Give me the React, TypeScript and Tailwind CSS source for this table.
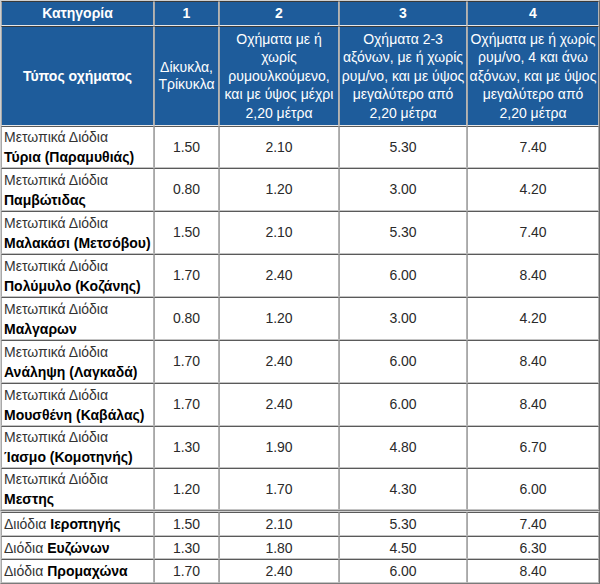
import React from "react";

const rows: { name: string; v: string[]; h: number }[] = [
  { name: "Τύρια (Παραμυθιάς)", v: ["1.50", "2.10", "5.30", "7.40"], h: 42 },
  { name: "Παμβώτιδας", v: ["0.80", "1.20", "3.00", "4.20"], h: 43 },
  { name: "Μαλακάσι (Μετσόβου)", v: ["1.50", "2.10", "5.30", "7.40"], h: 43 },
  { name: "Πολύμυλο (Κοζάνης)", v: ["1.70", "2.40", "6.00", "8.40"], h: 43 },
  { name: "Μαλγαρων", v: ["0.80", "1.20", "3.00", "4.20"], h: 43 },
  { name: "Ανάληψη (Λαγκαδά)", v: ["1.70", "2.40", "6.00", "8.40"], h: 43 },
  { name: "Μουσθένη (Καβάλας)", v: ["1.70", "2.40", "6.00", "8.40"], h: 43 },
  { name: "Ίασμο (Κομοτηνής)", v: ["1.30", "1.90", "4.80", "6.70"], h: 42 },
  { name: "Μεστης", v: ["1.20", "1.70", "4.30", "6.00"], h: 42 },
];

const rows2: { pre: string; name: string; v: string[]; h: number }[] = [
  { pre: "Διιόδια ", name: "Ιεροπηγής", v: ["1.50", "2.10", "5.30", "7.40"], h: 24 },
  { pre: "Διόδια ", name: "Ευζώνων", v: ["1.30", "1.80", "4.50", "6.30"], h: 23 },
  { pre: "Διόδια ", name: "Προμαχώνα", v: ["1.70", "2.40", "6.00", "8.40"], h: 24 },
];

const cell =
  "border-t border-l border-r border-b border-t-[#5a5a5a] border-l-[#a8a8a8] border-r-[#b4b4b4] border-b-[#c4c4c4]";
const hcell =
  "border-t border-l border-r border-b border-t-[#3a3a3a] border-l-[#a8a8a8] border-r-[#b4b4b4] border-b-[#e8e8e8] bg-[#1e5c9b] text-white";

function Cols() {
  return (
    <colgroup>
      <col style={{ width: 153 }} />
      <col style={{ width: 65 }} />
      <col style={{ width: 120 }} />
      <col style={{ width: 128 }} />
      <col style={{ width: 132 }} />
    </colgroup>
  );
}

export default function App() {
  return (
    <div className="w-[600px] h-[584px] bg-white font-['Liberation_Sans',Arial,sans-serif] text-[14px] text-[#2a2a2a] overflow-hidden">
      <table className="w-[598px] table-fixed border-separate border-spacing-0 border border-t-[#d0d0d0] border-l-[#d0d0d0] border-r-[#6a6a6a] border-b-[#7a7a7a]">
        <Cols />
        <tbody>
          <tr className="h-[25px]">
            <td className={`${hcell} text-center font-bold`}>Κατηγορία</td>
            <td className={`${hcell} text-center font-bold`}>1</td>
            <td className={`${hcell} text-center font-bold`}>2</td>
            <td className={`${hcell} text-center font-bold`}>3</td>
            <td className={`${hcell} text-center font-bold`}>4</td>
          </tr>
          <tr className="h-[100px]">
            <td className={`${hcell} text-center font-bold`}>Τύπος οχήματος</td>
            <td className={`${hcell} text-center leading-[17px]`}>Δίκυκλα, Τρίκυκλα</td>
            <td className={`${hcell} text-center leading-[18.5px] px-[2px]`}>
              Οχήματα με ή χωρίς ρυμουλκούμενο, και με ύψος μέχρι 2,20 μέτρα
            </td>
            <td className={`${hcell} text-center leading-[18.5px] px-[1px]`}>
              Οχήματα 2-3 αξόνων, με ή χωρίς ρυμ/νο, και με ύψος μεγαλύτερο από 2,20 μέτρα
            </td>
            <td className={`${hcell} text-center leading-[18.5px] px-[1px]`}>
              Οχήματα με ή χωρίς ρυμ/νο, 4 και άνω αξόνων, και με ύψος μεγαλύτερο από 2,20 μέτρα
            </td>
          </tr>
          {rows.map((r) => (
            <tr key={r.name} style={{ height: r.h }}>
              <td className={`${cell} pl-[2px] leading-[20px]`}>
                <div className="text-[#333]">Μετωπικά Διόδια</div>
                <div className="font-bold text-black">{r.name}</div>
              </td>
              {r.v.map((x, i) => (
                <td key={i} className={`${cell} text-center`}>
                  {x}
                </td>
              ))}
            </tr>
          ))}
        </tbody>
      </table>
      <table className="w-[598px] table-fixed border-separate border-spacing-0 border border-t-[#d0d0d0] border-l-[#d0d0d0] border-r-[#6a6a6a] border-b-[#7a7a7a]">
        <Cols />
        <tbody>
          {rows2.map((r) => (
            <tr key={r.name} style={{ height: r.h }}>
              <td className={`${cell} pl-[2px] leading-[18px]`}>
                <span className="text-[#333]">{r.pre}</span>
                <span className="font-bold text-black">{r.name}</span>
              </td>
              {r.v.map((x, i) => (
                <td key={i} className={`${cell} text-center leading-[18px]`}>
                  {x}
                </td>
              ))}
            </tr>
          ))}
        </tbody>
      </table>
    </div>
  );
}
